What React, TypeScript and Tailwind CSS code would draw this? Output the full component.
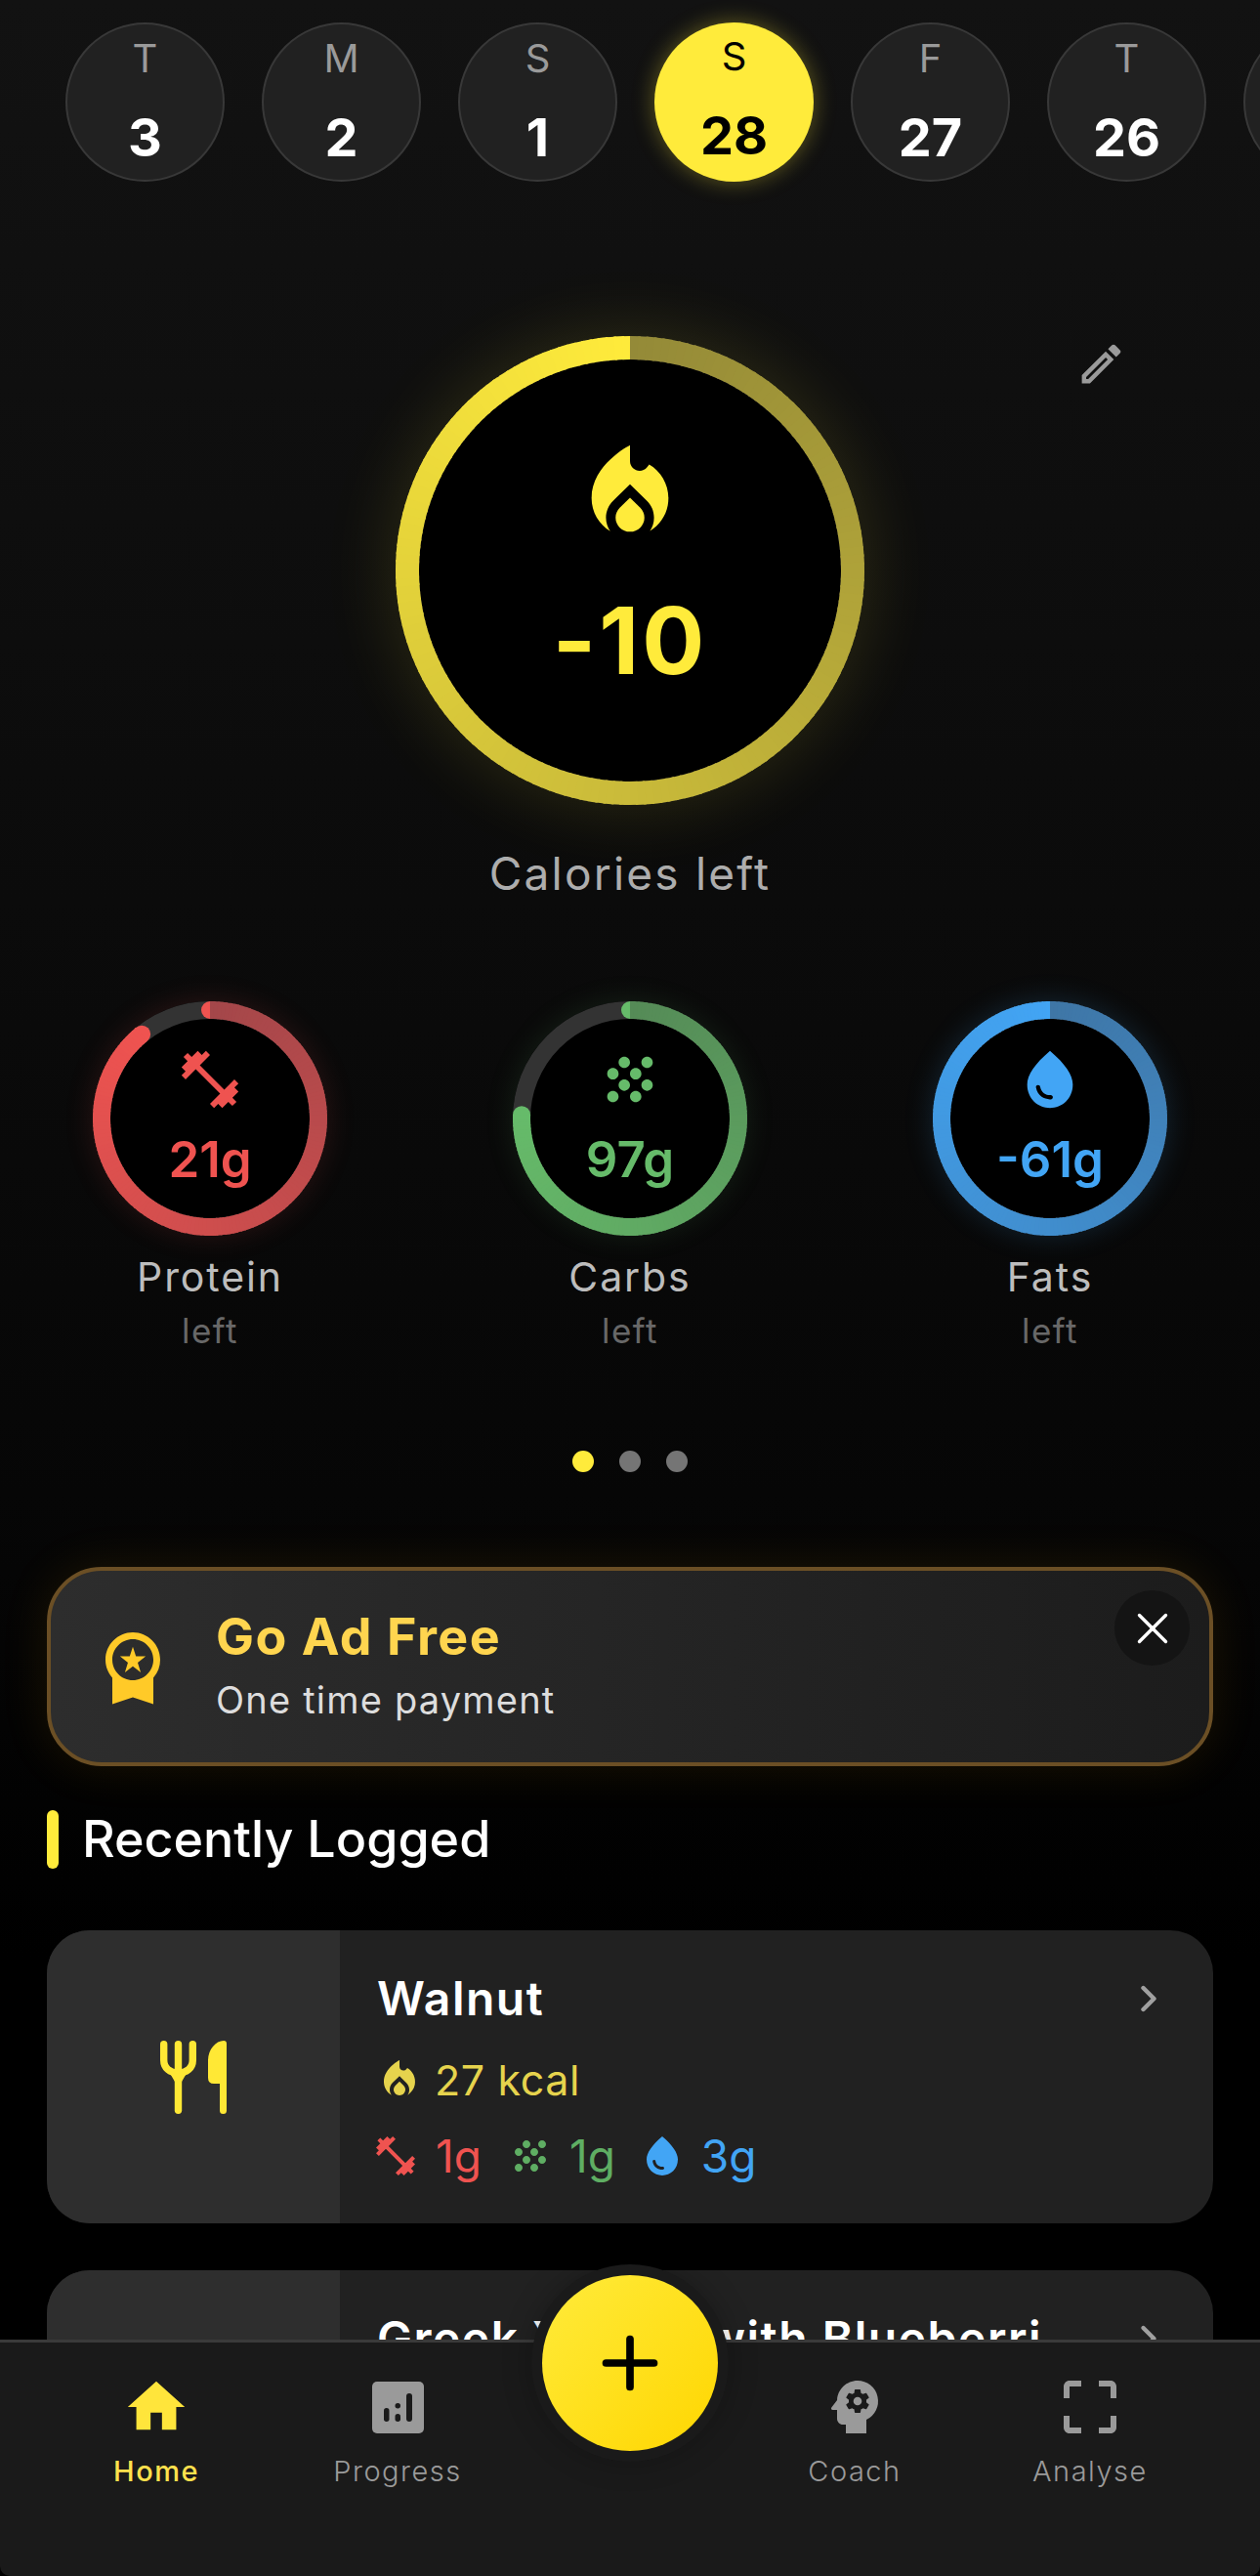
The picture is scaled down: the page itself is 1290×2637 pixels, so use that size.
import { MdCropFree, MdFitnessCenter, MdGrain, MdHome, MdLocalFireDepartment, MdOutlineEdit, MdPsychology, MdWaterDrop, MdWorkspacePremium } from 'react-icons/md';
import { ChevronRight, Plus, X } from 'lucide-react';
import type { ReactNode } from 'react';

const days = [
  { letter: 'T', num: '3' },
  { letter: 'M', num: '2' },
  { letter: 'S', num: '1' },
  { letter: 'S', num: '28', active: true },
  { letter: 'F', num: '27' },
  { letter: 'T', num: '26' },
];

type Food = { name: string; kcal?: string; protein?: string; carbs?: string; fats?: string };

const foods: Food[] = [
  { name: 'Walnut', kcal: '27 kcal', protein: '1g', carbs: '1g', fats: '3g' },
  { name: 'Greek Yogurt with Blueberries' },
];

function hex(c: string) {
  return [1, 3, 5].map((i) => parseInt(c.slice(i, i + 2), 16));
}

function mix(a: string, b: string, t: number) {
  const ca = hex(a);
  const cb = hex(b);
  return `rgb(${ca.map((v, i) => Math.round(v + (cb[i] - v) * t)).join(',')})`;
}

function polar(c: number, r: number, deg: number) {
  const rad = ((deg - 90) * Math.PI) / 180;
  return [c + r * Math.cos(rad), c + r * Math.sin(rad)];
}

// ring stroke fades along the arc, so it is drawn as many short pieces
function GradientRing({ size, stroke, sweep, from, to }: { size: number; stroke: number; sweep: number; from: string; to: string }) {
  const c = size / 2;
  const r = c - stroke / 2;
  const pieces = [];
  for (let a = 0; a < sweep; a += 2) {
    const end = Math.min(a + 2.6, sweep);
    const [x1, y1] = polar(c, r, a);
    const [x2, y2] = polar(c, r, end);
    pieces.push(
      <path key={a} d={`M${x1} ${y1}A${r} ${r} 0 0 1 ${x2} ${y2}`} fill="none" stroke={mix(from, to, a / sweep)} strokeWidth={stroke} />
    );
  }
  const [ex, ey] = polar(c, r, sweep);
  return (
    <svg width={size} height={size} className="absolute inset-0">
      <circle cx={c} cy={c} r={c} fill="#000" />
      <circle cx={c} cy={c} r={r} fill="none" stroke="#333333" strokeWidth={stroke} />
      {sweep < 360 && <circle cx={c} cy={stroke / 2} r={stroke / 2} fill={to} />}
      {sweep < 360 && <circle cx={ex} cy={ey} r={stroke / 2} fill={to} />}
      {pieces}
    </svg>
  );
}

function Cutlery() {
  return (
    <svg width="68" height="75" viewBox="0 0 68 75" fill="#ffe835">
      <path d="M3.7 3.7V20C3.7 28 10 33 18.5 33S33.3 28 33.3 20V3.7" fill="none" stroke="#ffe835" strokeWidth="7.4" strokeLinecap="round" />
      <path d="M18.5 3.7V71.3" fill="none" stroke="#ffe835" strokeWidth="7.4" strokeLinecap="round" />
      <path d="M8 30Q18.5 38 29 30L22 42H15Z" />
      <path d="M61 71.5V44H55Q49 44 49 38V20C49 9 57 0 65 0Q68 0 68 3V71.5A3.5 3.5 0 0 1 61 71.5Z" />
    </svg>
  );
}

function Macro({ label, value, color, glow, sweep, from, to, icon }: { label: string; value: string; color: string; glow: string; sweep: number; from: string; to: string; icon: ReactNode }) {
  return (
    <div className="flex w-[240px] flex-col items-center">
      <div className={`relative h-[240px] w-[240px] rounded-full ${glow}`}>
        <GradientRing size={240} stroke={18} sweep={sweep} from={from} to={to} />
        <div className="relative flex flex-col items-center pt-[45px]">
          {icon}
          <div className={`mt-[18px] text-[51px] leading-[58px] font-semibold ${color}`}>{value}</div>
        </div>
      </div>
      <div className="mt-[17px] text-[41px] leading-[50px] tracking-[1.9px] text-[#bdbdbd]">{label}</div>
      <div className="mt-[8px] text-[35px] leading-[44px] tracking-[1.5px] text-[#686868]">left</div>
    </div>
  );
}

function FoodCard({ food }: { food: Food }) {
  return (
    <div className="flex h-[300px] overflow-hidden rounded-[44px] bg-[#212121]">
      <div className="flex w-[300px] shrink-0 items-center justify-center bg-[#2e2e2e]">
        <Cutlery />
      </div>
      <div className="flex min-w-0 flex-1 flex-col pt-[41px] pl-[38px]">
        <div className="flex items-center justify-between pr-[44px]">
          <div className="w-[736px] truncate text-[48px] leading-[58px] font-semibold tracking-[1.5px] text-white">{food.name}</div>
          <ChevronRight size={44} className="text-[#a0a0a0]" strokeWidth={2.4} />
        </div>
        {food.kcal && (
          <div className="mt-[28px] flex items-center gap-[12px] text-[43px] leading-[52px] tracking-[0.6px] text-[#e6d34d]">
            <MdLocalFireDepartment size={48} className="-ml-[1px]" />
            <span>{food.kcal}</span>
          </div>
        )}
        {food.protein && (
          <div className="mt-[26px] flex items-center text-[46px] leading-[52px]">
            <MdFitnessCenter size={48} className="-ml-[5px] text-[#ef5350]" />
            <span className="ml-[17px] text-[#ef5350]">{food.protein}</span>
            <MdGrain size={48} className="ml-[26px] text-[#5fae63]" />
            <span className="ml-[16px] text-[#5fae63]">{food.carbs}</span>
            <MdWaterDrop size={48} className="ml-[24px] text-[#42a5f5]" />
            <span className="ml-[16px] text-[#42a5f5]">{food.fats}</span>
          </div>
        )}
      </div>
    </div>
  );
}

function NavItem({ label, active, icon }: { label: string; active?: boolean; icon: ReactNode }) {
  return (
    <div className="flex w-[160px] flex-col items-center">
      <div className="flex h-[56px] items-center justify-center">{icon}</div>
      <div className={`mt-[20px] text-[29px] leading-[36px] tracking-[1.5px] ${active ? 'font-medium text-[#ffe14d]' : 'font-light text-[#9a9a9a]'}`}>{label}</div>
    </div>
  );
}

export default function App() {
  return (
    <div className="relative h-[2637px] w-[1290px] overflow-hidden bg-[linear-gradient(180deg,#121212_0%,#070707_55%,#000000_76%)] [font-family:Inter,sans-serif]">
      {/* Day strip */}
      <div className="flex gap-[38px] pt-[23px] pl-[67px]">
        {days.map((d) => (
          <div
            key={d.num}
            className={`flex h-[163px] w-[163px] shrink-0 flex-col items-center rounded-full pt-[11px] ${
              d.active ? 'bg-[#ffeb3b] shadow-[0_0_22px_rgba(255,235,59,0.35)]' : 'border-2 border-[#383838] bg-[#212121]'
            }`}
          >
            <div className={`text-[40px] leading-[48px] ${d.active ? 'text-black' : 'text-[#9a9a9a]'}`}>{d.letter}</div>
            <div className={`mt-[25px] text-[54px] leading-[64px] font-bold ${d.active ? 'text-black' : 'text-white'}`}>{d.num}</div>
          </div>
        ))}
        <div className="h-[163px] w-[163px] shrink-0 rounded-full border-2 border-[#383838] bg-[#212121]" />
      </div>

      {/* Calories */}
      <div className="relative mt-[158px] flex flex-col items-center">
        <MdOutlineEdit size={53} className="absolute top-[2px] left-[1101px] text-[#9a9a9a]" />
        <div className="relative h-[480px] w-[480px] rounded-full shadow-[0_0_70px_6px_rgba(255,235,59,0.12)]">
          <GradientRing size={480} stroke={24} sweep={360} from="#948a38" to="#ffeb3b" />
          <div className="relative flex flex-col items-center pt-[102px]">
            <MdLocalFireDepartment size={118} className="text-[#ffeb3b]" />
            <div className="mt-[37px] text-[95px] leading-[110px] font-bold tracking-[3px] text-[#ffeb3b]">-10</div>
          </div>
        </div>
        <div className="mt-[42px] text-[46px] leading-[56px] tracking-[2.2px] text-[#adadad]">Calories left</div>
      </div>

      {/* Macros */}
      <div className="mt-[103px] flex justify-between px-[95px]">
        <Macro
          label="Protein"
          value="21g"
          color="text-[#ef5350]"
          glow="shadow-[0_0_30px_rgba(239,83,80,0.15)]"
          sweep={321}
          from="#a4474a"
          to="#ef5350"
          icon={<MdFitnessCenter size={70} className="text-[#ef5350]" />}
        />
        <Macro
          label="Carbs"
          value="97g"
          color="text-[#66bb6a]"
          glow="shadow-[0_0_30px_rgba(102,187,106,0.13)]"
          sweep={272}
          from="#558b57"
          to="#66bb6a"
          icon={<MdGrain size={70} className="text-[#66bb6a]" />}
        />
        <Macro
          label="Fats"
          value="-61g"
          color="text-[#42a5f5]"
          glow="shadow-[0_0_30px_rgba(66,165,245,0.18)]"
          sweep={360}
          from="#3f76a6"
          to="#42a5f5"
          icon={<MdWaterDrop size={70} className="text-[#42a5f5]" />}
        />
      </div>

      {/* Pager dots */}
      <div className="mt-[101px] flex justify-center gap-[26px]">
        <div className="h-[22px] w-[22px] rounded-full bg-[#ffeb3b]" />
        <div className="h-[22px] w-[22px] rounded-full bg-[#757575]" />
        <div className="h-[22px] w-[22px] rounded-full bg-[#757575]" />
      </div>

      {/* Ad banner */}
      <div className="relative mx-[48px] mt-[97px] flex h-[204px] items-center rounded-[56px] border-[4px] border-[#6b4f25] bg-[linear-gradient(90deg,#2d2d2d,#1c1c1c)] shadow-[0_0_50px_rgba(255,179,0,0.1)]">
        <MdWorkspacePremium size={84} className="ml-[42px] text-[#ffca28]" />
        <div className="ml-[43px] -mt-[3px] flex flex-col">
          <div className="text-[52px] leading-[60px] font-bold tracking-[1.5px] text-[#ffd54f]">Go Ad Free</div>
          <div className="mt-[11px] text-[38px] leading-[46px] tracking-[1.2px] text-[#dddddd]">One time payment</div>
        </div>
        <button className="absolute top-[20px] right-[20px] flex h-[77px] w-[77px] items-center justify-center rounded-full bg-[#141414]">
          <X size={54} strokeWidth={1.5} className="text-white" />
        </button>
      </div>

      {/* Recently logged */}
      <div className="mx-[48px] mt-[45px] flex items-center">
        <div className="h-[60px] w-[12px] rounded-full bg-[#ffeb3b]" />
        <div className="ml-[24px] text-[52px] leading-[60px] font-medium text-white">Recently Logged</div>
      </div>
      <div className="mx-[48px] mt-[63px] flex flex-col gap-[48px]">
        {foods.map((f) => (
          <FoodCard key={f.name} food={f} />
        ))}
      </div>

      {/* Bottom nav */}
      <div className="absolute right-0 bottom-0 left-0 h-[242px] rounded-b-[10px] border-t-[3px] border-[#3a3a3a] bg-[#1a1a1a]">
        <div className="relative h-full pt-[38px]">
          <div className="absolute top-[38px] left-[80px]">
            <NavItem label="Home" active icon={<MdHome size={70} className="text-[#ffe53b]" />} />
          </div>
          <div className="absolute top-[38px] left-[327px]">
            <NavItem
              label="Progress"
              icon={
                <svg width="53" height="53" viewBox="0 0 53 53">
                  <rect width="53" height="53" rx="5" fill="#9a9a9a" />
                  <rect x="12" y="27" width="5.5" height="14" rx="2.7" fill="#1a1a1a" />
                  <rect x="23.5" y="22" width="5.5" height="5.5" rx="2.7" fill="#1a1a1a" />
                  <rect x="23.5" y="33" width="5.5" height="8" rx="2.7" fill="#1a1a1a" />
                  <rect x="35" y="12" width="6" height="29" rx="3" fill="#1a1a1a" />
                </svg>
              }
            />
          </div>
          <div className="absolute top-[38px] left-[795px]">
            <NavItem label="Coach" icon={<MdPsychology size={72} className="text-[#9a9a9a]" />} />
          </div>
          <div className="absolute top-[38px] left-[1036px]">
            <NavItem label="Analyse" icon={<MdCropFree size={72} className="text-[#9a9a9a]" />} />
          </div>
        </div>
      </div>

      {/* Add button sits over the nav edge */}
      <div className="absolute top-[2318px] left-[544px] rounded-full bg-[#1a1a1a] p-[11px] shadow-[0_0_30px_rgba(0,0,0,0.25)]">
        <div className="flex h-[180px] w-[180px] items-center justify-center rounded-full bg-[linear-gradient(135deg,#ffeb3b,#ffd600)]">
          <Plus size={84} strokeWidth={2.2} className="text-black" />
        </div>
      </div>
    </div>
  );
}
